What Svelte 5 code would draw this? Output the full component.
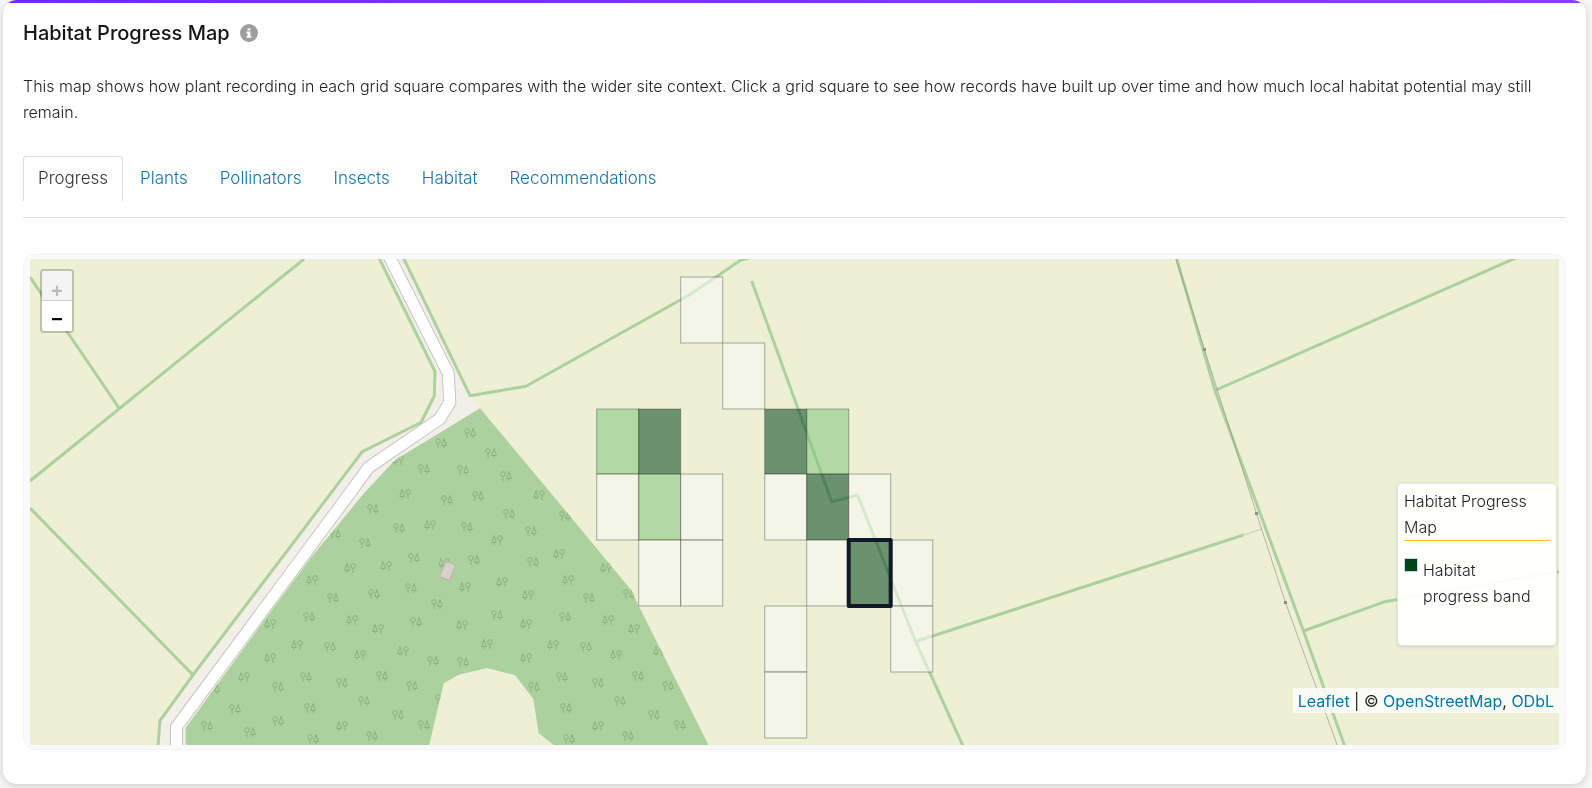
<script>
  let tabs = ['Progress', 'Plants', 'Pollinators', 'Insects', 'Habitat', 'Recommendations'];
  let activeTab = $state('Progress');

  const hedges = [
    'M30 277 L119 408',
    'M304 259 L30 481',
    'M30 508 L193 675',
    'M379 258 L435 371.5 L434.3 396 L421 422.5 L362.3 451.7 L193 675 L160 720.7 L158 746',
    'M403.5 258 L470 395.7 L526 386.3 L690 294.5 L741 260 L749 258',
    'M751.7 281 L831.7 501.7 L857.7 495.3 L915.7 641.7 L963 746',
    'M915.7 641.5 L1243.5 535',
    'M1176.5 258 L1215 390.7 L1303.5 631 L1344.7 746',
    'M1216 390 L1518 257',
    'M1303.3 631 L1385 601.7 L1400 599 L1560 571.5'
  ];

  const road = 'M388.5 255 L448.2 373.3 L449.8 402.5 L439.5 419 L368.8 467.3 L344.8 500 L176.5 727 L176.5 748';
  const wood =
    'M480 408.3 L556.7 500 L631.7 590.7 L638.3 605 L709 746 L555 746 L538.7 733.3 L533.3 699 L515 675.3 L487 668 L458.3 675 L443.7 683.3 L429 746 L185.7 746 L185.7 727.7 L263 622 L311.7 556.7 L363.3 494 L395 460 Z';

  // o = round tree on the left, c = conifer on the left
  const trees = {
    o: [
      [470, 433], [441, 443], [491, 453], [424, 469], [463, 470], [506, 476], [447, 500], [478, 496],
      [373, 509], [335, 534], [365, 543], [399, 528], [333, 598], [374, 594], [309, 617], [330, 647],
      [306, 677], [278, 687], [342, 683], [214, 689], [235, 709], [310, 708], [364, 701], [382, 676],
      [278, 721], [207, 726], [250, 732], [372, 736], [313, 739], [467, 527], [509, 514], [565, 516],
      [531, 531], [533, 562], [414, 558], [474, 560], [411, 588], [629, 594], [589, 598], [437, 604],
      [497, 615], [565, 617], [416, 622], [586, 647], [433, 661], [463, 662], [562, 677], [638, 676],
      [598, 683], [534, 687], [668, 686], [412, 686], [441, 699], [620, 701], [566, 708], [398, 715],
      [654, 715], [424, 725], [680, 725], [628, 736], [569, 739]
    ],
    c: [
      [398, 460], [405, 494], [539, 495], [350, 568], [386, 566], [312, 580], [352, 620], [378, 629],
      [270, 624], [297, 645], [360, 655], [270, 658], [244, 677], [342, 726], [430, 525], [497, 540],
      [559, 554], [444, 563], [606, 568], [502, 582], [568, 580], [465, 587], [528, 595], [608, 620],
      [526, 624], [462, 625], [634, 629], [487, 644], [553, 645], [403, 651], [659, 651], [616, 655],
      [526, 658], [598, 726]
    ]
  };

  const pylons = [[1204, 349], [1256, 513], [1285, 602]];

  const bands = { none: '#f7fcf5', mid: '#81c57c', high: '#00441b' };
  const rows = [277, 343, 409, 474, 540, 606, 672, 738];
  const squares = [
    [2, 0, 'none'], [3, 1, 'none'],
    [0, 2, 'mid'], [1, 2, 'high'], [4, 2, 'high'], [5, 2, 'mid'],
    [0, 3, 'none'], [1, 3, 'mid'], [2, 3, 'none'], [4, 3, 'none'], [5, 3, 'high'], [6, 3, 'none'],
    [1, 4, 'none'], [2, 4, 'none'], [5, 4, 'none'], [7, 4, 'none'],
    [4, 5, 'none'], [7, 5, 'none'], [4, 6, 'none'],
    [6, 4, 'high']
  ].map(([col, row, band]) => ({
    id: `${col}-${row}`,
    x: 596.7 + col * 42,
    y: rows[row],
    height: rows[row + 1] - rows[row],
    fill: bands[band]
  }));
  const selected = '6-4';
</script>

<section class="card">
  <header>
    <h2>Habitat Progress Map</h2>
    <button class="info" aria-label="About this map">
      <svg viewBox="0 0 18 18" width="18" height="18">
        <circle cx="9" cy="9" r="9" fill="#9e9e9e" />
        <path d="M7.6 4.2h2.8v2.4H7.6zM6.6 7.6h3.8v4.4h1v1.8H6.6V12h1V9.4h-1z" fill="#fff" />
      </svg>
    </button>
  </header>

  <p class="intro">
    This map shows how plant recording in each grid square compares with the wider site context. Click a grid
    square to see how records have built up over time and how much local habitat potential may still remain.
  </p>

  <nav class="tabs">
    {#each tabs as tab}
      <button class="tab" class:active={tab === activeTab} onclick={() => (activeTab = tab)}>{tab}</button>
    {/each}
  </nav>

  <div class="frame">
    <div class="map">
      <svg class="tiles" viewBox="30 259 1529 486" preserveAspectRatio="xMidYMid slice" role="img" aria-label="Map of grid squares">
        <defs>
          <clipPath id="wood"><path d={wood} /></clipPath>
          <g id="round-tree">
            <circle cx="0" cy="-2" r="2.3" />
            <path d="M0 0.3 V5" />
          </g>
          <g id="conifer">
            <path d="M0 -4.5 L-2.3 2.5 H2.3 Z M0 2.5 V5" />
          </g>
        </defs>

        <rect x="30" y="259" width="1529" height="486" fill="#edf0d5" />
        <path
          d="M379 258 L435 371.5 L434.3 396 L421 422.5 L362.3 451.7 L193 675 L160 720.7 L158 746 H190 L190 725 L395 462 L480 408.3 L470 395.7 L403.5 258 Z"
          fill="#f2efe9"
        />
        <path d={wood} fill="#add19e" />
        <g clip-path="url(#wood)" fill="none" stroke="#8ab27e" stroke-width="1">
          {#each trees.o as [x, y]}
            <use href="#round-tree" x={x - 3} {y} />
            <use href="#conifer" x={x + 3} {y} />
          {/each}
          {#each trees.c as [x, y]}
            <use href="#conifer" x={x - 3} {y} />
            <use href="#round-tree" x={x + 3} {y} />
          {/each}
        </g>
        <path d="M445.7 561.5 L455.5 565 L449.3 580.3 L439.5 576.7 Z" fill="#d9d0c9" stroke="#c2b1a9" />

        <g fill="none" stroke="#add19e" stroke-width="3" stroke-linejoin="round">
          {#each hedges as d}
            <path {d} />
          {/each}
        </g>
        <path d={road} fill="none" stroke="#c6c4c2" stroke-width="13" />
        <path d={road} fill="none" stroke="#fff" stroke-width="11" />

        <path d="M1243.5 535 L1262 529" stroke="#c9c9b4" stroke-width="1" />
        <path d="M1175.7 258 L1204.5 349.5 L1256.5 513.5 L1285.5 602.5 L1337.5 746" fill="none" stroke="#888" stroke-opacity="0.6" />
        {#each pylons as [x, y]}
          <rect x={x - 1} y={y - 1} width="3" height="3" fill="#8d8d8d" />
        {/each}

        {#each squares as sq (sq.id)}
          <rect
            class="square"
            class:selected={sq.id === selected}
            x={sq.x}
            y={sq.y}
            width="42"
            height={sq.height}
            fill={sq.fill}
          />
        {/each}
      </svg>

      <div class="zoom">
        <button disabled aria-label="Zoom in">+</button>
        <button aria-label="Zoom out">−</button>
      </div>

      <aside class="legend">
        <h3>Habitat Progress Map</h3>
        <div class="entry">
          <span class="swatch"></span>
          <span>Habitat progress band</span>
        </div>
      </aside>

      <div class="attribution">
        <a href="#leaflet">Leaflet</a> | © <a href="#osm">OpenStreetMap</a>, <a href="#odbl">ODbL</a>
      </div>
    </div>
  </div>
</section>

<style>
  :global(body) {
    margin: 0;
    background: #f8f8f8;
  }
  :global(#app) {
    filter: drop-shadow(0 2px 5px rgb(0 0 0 / 18%));
  }

  .card {
    margin: 0 6px 4px 3px;
    padding: 20px 20px 34px;
    position: relative;
    overflow: hidden;
    background: #fff;
    border-radius: 14px;
    font-family: Inter, "Open Sans", sans-serif;
    font-size: 16px;
    font-weight: 300;
    line-height: 26px;
    color: #222;
  }
  .card::before {
    content: "";
    position: absolute;
    inset: 0 0 auto;
    height: 3px;
    background: linear-gradient(90deg, #6f2cff, #8b3dff);
  }

  header {
    display: flex;
    align-items: center;
    gap: 10px;
  }
  h2 {
    margin: 0;
    font-size: 20px;
    font-weight: 500;
    color: #151515;
  }
  .info {
    display: flex;
    padding: 0;
    border: 0;
    background: none;
  }

  .intro {
    margin: 27px 0 31px;
  }

  .tabs {
    display: flex;
    gap: 2px;
    padding-bottom: 16px;
    border-bottom: 1px solid #ddd;
  }
  .tab {
    padding: 8px 14px 10px;
    border: 1px solid transparent;
    border-bottom: 0;
    border-radius: 4px 4px 0 0;
    background: none;
    font: inherit;
    font-size: 17px;
    color: #0e76ad;
    cursor: pointer;
  }
  .tab.active {
    border-color: #ddd;
    color: #333;
  }

  .frame {
    margin-top: 36px;
    padding: 4px 6px;
    border: 1px solid #f3f3f3;
    border-radius: 12px;
    background: #fafafa;
  }
  .map {
    position: relative;
    height: 486px;
    overflow: hidden;
  }
  .tiles {
    display: block;
    width: 100%;
    height: 100%;
  }
  .square {
    fill-opacity: 0.55;
    stroke: #333;
    stroke-opacity: 0.4;
    stroke-width: 1;
  }
  .square.selected {
    stroke: #111827;
    stroke-opacity: 1;
    stroke-width: 4;
    stroke-linejoin: round;
  }

  .zoom {
    position: absolute;
    top: 10px;
    left: 10px;
    border: 2px solid rgb(0 0 0 / 20%);
    border-radius: 4px;
    background-clip: padding-box;
  }
  .zoom button {
    display: block;
    width: 30px;
    height: 30px;
    padding: 8px 0 0;
    border: 0;
    background: #fff;
    font: bold 20px "Liberation Mono", monospace;
    color: #000;
  }
  .zoom button:first-child {
    padding-top: 10px;
    border-bottom: 1px solid #ccc;
    border-radius: 2px 2px 0 0;
  }
  .zoom button:last-child {
    border-radius: 0 0 2px 2px;
  }
  .zoom button:disabled {
    background: #f4f4f4;
    color: #bbb;
  }

  .legend {
    position: absolute;
    right: 2px;
    bottom: 99px;
    box-sizing: border-box;
    width: 160px;
    padding: 4px 6px 36px;
    border: 1px solid #e2e4e0;
    border-radius: 5px;
    background: rgb(255 255 255 / 96%);
    box-shadow: 0 1px 3px rgb(0 0 0 / 12%);
  }
  h3 {
    margin: 0 0 16px;
    border-bottom: 1px solid #fbbf24;
    font-size: 16px;
    font-weight: 300;
  }
  .entry {
    display: flex;
    gap: 5px;
    padding-right: 12px;
  }
  .swatch {
    flex: none;
    width: 12px;
    height: 12px;
    margin-top: 1px;
    border: 1px solid #cbd5e1;
    background: #00441b;
  }

  .attribution {
    position: absolute;
    right: 0;
    bottom: 32px;
    padding: 1px 5px 0;
    font-weight: 400;
    line-height: 24px;
    background: rgb(255 255 255 / 80%);
  }
  a {
    color: #0078a8;
    text-decoration: none;
  }
</style>
